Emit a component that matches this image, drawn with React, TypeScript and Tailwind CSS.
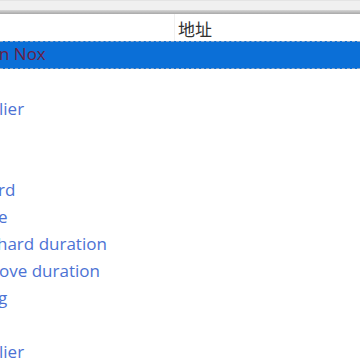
const rows = [
  { text: "", indent: 0 },
  { text: "lier", indent: -1 },
  { text: "", indent: 0 },
  { text: "", indent: 0 },
  { text: "rd", indent: -2 },
  { text: "e", indent: -2 },
  { text: "hard duration", indent: -3 },
  { text: "ove duration", indent: -1 },
  { text: "g", indent: -2 },
  { text: "", indent: 0 },
  { text: "lier", indent: -1 },
];

export default function App() {
  return (
    <div
      className="w-[360px] h-[360px] overflow-hidden bg-white"
      style={{ fontFamily: '"Open Sans", "Noto Sans CJK SC", sans-serif' }}
    >
      {/* toolbar strip */}
      <div className="h-[10px] bg-[#f0f0f0] border-t border-t-[#e4e4e4]" />
      <div className="h-[4px] bg-gradient-to-b from-[#d6d6d6] to-[#a8a8a8]" />

      {/* column header */}
      <div className="flex h-[27px] bg-white">
        <div className="w-[175px] border-r border-r-[#f0f0f0]" />
        <div className="pl-[3px] pt-[6px] text-[17px] leading-[20px] text-[#303030]">地址</div>
      </div>

      {/* selected row */}
      <div className="h-[28px] bg-[#0b6fd7] border-y border-dashed border-[#8fa8c8] overflow-hidden">
        <div className="ml-[-1px] text-[17px] leading-[24px] text-[#6a1d45] whitespace-nowrap">n Nox</div>
      </div>

      {rows.map((r, i) => (
        <div key={i} className="h-[27px] overflow-hidden">
          <div
            className="text-[17px] leading-[25px] text-[#4c72d4] whitespace-nowrap"
            style={{ marginLeft: r.indent }}
          >
            {r.text}
          </div>
        </div>
      ))}
    </div>
  );
}
